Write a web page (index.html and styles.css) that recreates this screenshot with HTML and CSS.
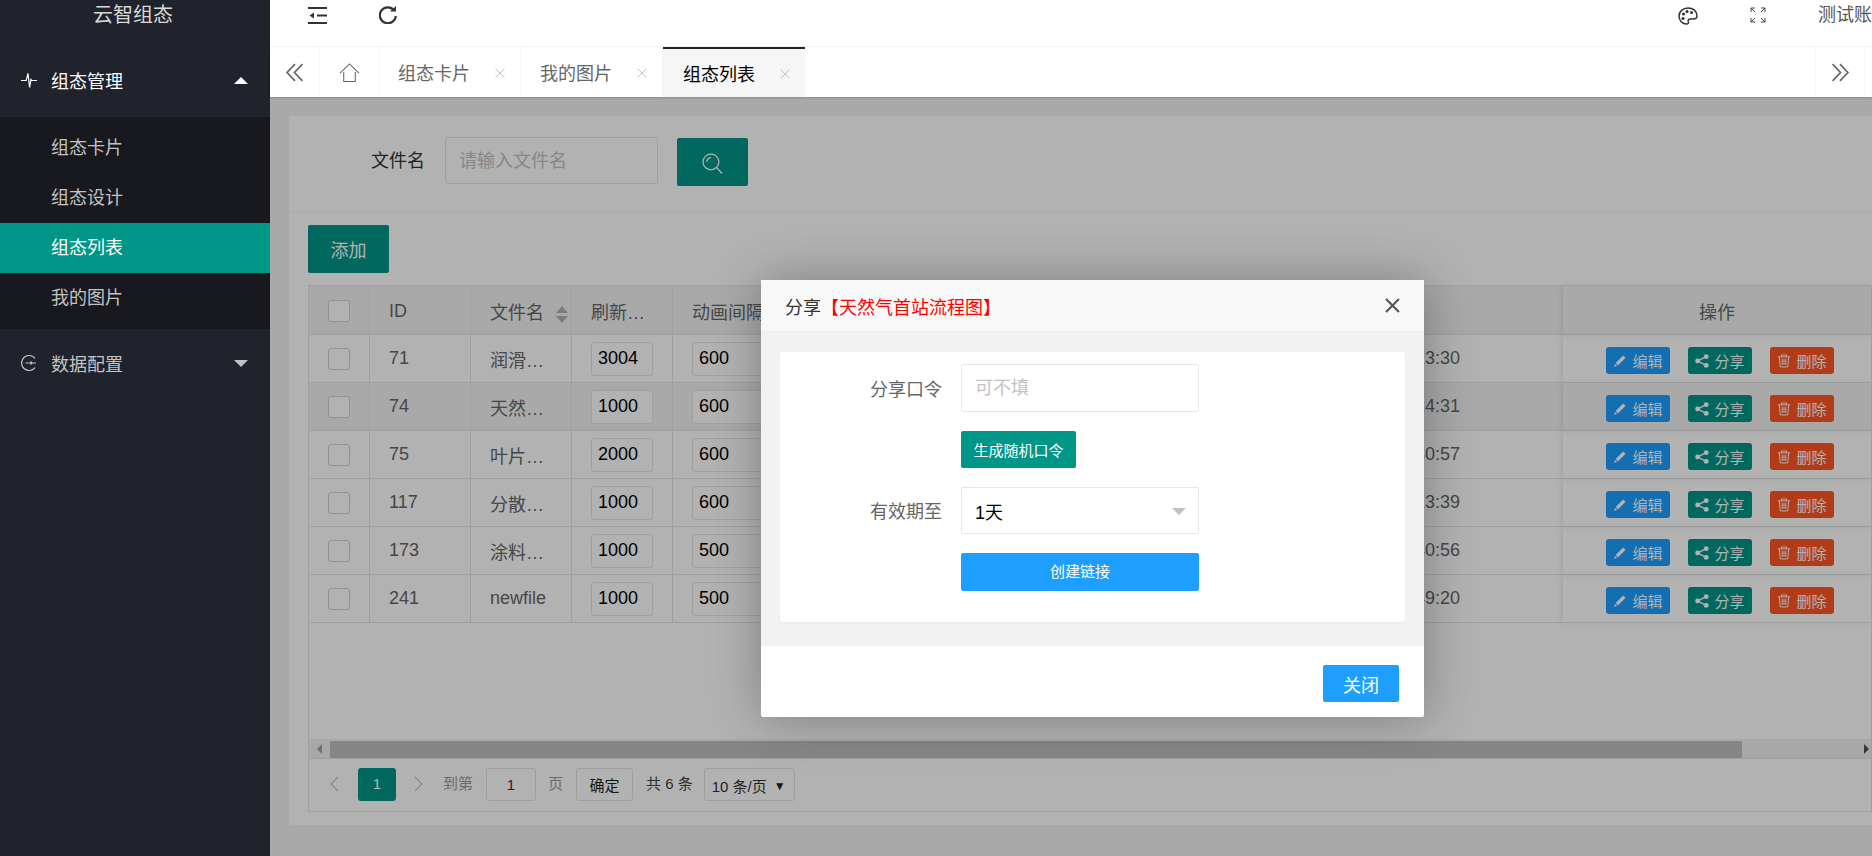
FILE: index.html
```html
<!DOCTYPE html>
<html lang="zh-CN">
<head>
    <meta charset="UTF-8">
    <title>云智组态</title>
    <link rel="stylesheet" href="styles.css">
</head>
<body>
    <svg class="sprites" xmlns="http://www.w3.org/2000/svg">
        <symbol id="i-edit" viewBox="0 0 16 16"><path d="M11.6 1.6l2.8 2.8-8.6 8.6-2.8-2.8zM2.3 11.4l2.3 2.3-3.4 1.1z" fill="currentColor"/></symbol>
        <symbol id="i-share" viewBox="0 0 16 16"><circle cx="12.8" cy="3" r="2.8" fill="currentColor"/><circle cx="12.8" cy="13" r="2.8" fill="currentColor"/><circle cx="3" cy="8" r="2.8" fill="currentColor"/><path d="M12.8 3L3 8l9.8 5" fill="none" stroke="currentColor" stroke-width="1.6"/></symbol>
        <symbol id="i-trash" viewBox="0 0 16 16"><path d="M1 3.2h14M5 3V1.2h6V3M2.8 3.4l.9 11.4h8.6l.9-11.4M6 5.6v7M8 5.6v7M10 5.6v7" fill="none" stroke="currentColor" stroke-width="1.1"/></symbol>
        <symbol id="i-x" viewBox="0 0 10 10"><path d="M.5 .5l9 9M9.500 .5l-9 9" fill="none" stroke="currentColor" stroke-width="1"/></symbol>
    </svg>

    <aside class="side">
        <div class="logo">云智组态</div>
        <div class="nav-item open">
            <svg class="nav-icon" viewBox="0 0 16 16"><path d="M0 8.500h5.200L7 1.500 8.600 15.500l1.400-8 .8 1h5.200" fill="none" stroke="currentColor" stroke-width="1.200"/></svg>
            <span>组态管理</span>
            <i class="arrow up"></i>
        </div>
        <div class="sub-nav">
            <a>组态卡片</a>
            <a>组态设计</a>
            <a class="active">组态列表</a>
            <a>我的图片</a>
        </div>
        <div class="nav-item second">
            <svg class="nav-icon" viewBox="0 0 16 16"><path d="M14 3.400A7.500 7.500 0 1 0 14 12.600M4.500 8H15M9.500 6.400L11 8 9.500 9.600" fill="none" stroke="currentColor" stroke-width="1.200"/></svg>
            <span>数据配置</span>
            <i class="arrow down"></i>
        </div>
    </aside>

    <div class="main">
        <header class="topbar">
            <svg class="top-icon shrink" viewBox="0 0 19 17"><path d="M0 1h19M0 16h19M9 8.500h10" fill="none" stroke="currentColor" stroke-width="2.200"/><path d="M6 5.500v6L1.500 8.500z" fill="currentColor"/></svg>
            <svg class="top-icon refresh" viewBox="0 0 18 18"><path d="M15 4.200A8 8 0 1 0 16.800 10" fill="none" stroke="currentColor" stroke-width="2.200"/><path d="M11 5.600h6V0z" fill="currentColor"/></svg>
            <div class="top-right">
                <svg class="top-icon theme" viewBox="0 0 20 18"><path d="M10 1C4.800 1 1 4.600 1 9c0 4.600 3.400 8 7.600 8 1.600 0 2.200-1 1.700-2.300-.5-1.500.3-2.700 2-2.700h3.200c2.200 0 3.500-1.300 3.500-3.200C19 4.200 15 1 10 1z" fill="none" stroke="currentColor" stroke-width="1.500"/><circle cx="5.500" cy="7" r="1.500" fill="currentColor"/><circle cx="9" cy="4.500" r="1.500" fill="currentColor"/><circle cx="13.500" cy="5.500" r="1.500" fill="currentColor"/><circle cx="5" cy="11.500" r="1.500" fill="currentColor"/></svg>
                <svg class="top-icon full" viewBox="0 0 16 16"><path d="M1 5V1h4M1 1l4 4M11 1h4v4M15 1l-4 4M1 11v4h4M1 15l4-4M15 11v4h-4M15 15l-4-4" fill="none" stroke="currentColor" stroke-width="1"/></svg>
                <span class="user">测试账号</span>
            </div>
        </header>

        <nav class="tabs">
            <div class="tab-btn left">
                <svg viewBox="0 0 18 18"><path d="M9 1L1.500 9 9 17M16 1L8.500 9 16 17" fill="none" stroke="currentColor" stroke-width="1.600"/></svg>
            </div>
            <div class="tab-home">
                <svg viewBox="0 0 20 18"><path d="M1 9.500L10 .8l9 8.700M4.500 8.500V17.500h11V8.500" fill="none" stroke="currentColor" stroke-width="1"/></svg>
            </div>
            <div class="tab">组态卡片<svg class="tab-x"><use href="#i-x"/></svg></div>
            <div class="tab">我的图片<svg class="tab-x"><use href="#i-x"/></svg></div>
            <div class="tab current">组态列表<svg class="tab-x"><use href="#i-x"/></svg></div>
            <div class="tab-fill"></div>
            <div class="tab-btn right">
                <svg viewBox="0 0 18 18"><path d="M2 1l7.500 8L2 17M9 1l7.500 8L9 17" fill="none" stroke="currentColor" stroke-width="1.600"/></svg>
            </div>
        </nav>

        <div class="content">
            <section class="card">
                <form class="search">
                    <label class="search-label">文件名</label>
                    <input class="search-input" placeholder="请输入文件名">
                    <button type="button" class="search-btn">
                        <svg viewBox="0 0 20 20"><circle cx="8.500" cy="8.500" r="7.500" fill="none" stroke="currentColor" stroke-width="1.200"/><path d="M14 14l5 5.500M4.500 8.500A4 4 0 0 1 8.500 4.500" fill="none" stroke="currentColor" stroke-width="1.200"/></svg>
                    </button>
                </form>
                <div class="list">
                    <button type="button" class="add-btn">添加</button>
                    <div class="table-box">
                        <div class="table-wrap">
                            <table>
                                <colgroup>
                                    <col class="c-check"><col class="c-id"><col class="c-name"><col class="c-num"><col class="c-anim"><col><col class="c-ops">
                                </colgroup>
                                <thead>
                                    <tr>
                                        <th><div class="check"></div></th>
                                        <th>ID</th>
                                        <th class="sortable">文件名<span class="sort"><i></i><i></i></span></th>
                                        <th><div class="clip">刷新间隔</div></th>
                                        <th>动画间隔</th>
                                        <th></th>
                                        <th class="ops">操作</th>
                                    </tr>
                                </thead>
                                <tbody>
                                    <tr>
                                        <td><div class="check"></div></td><td>71</td><td><div class="clip">润滑油站流程图</div></td>
                                        <td><input class="num" value="3004"></td><td><input class="num wide" value="600"></td>
                                        <td class="time">23:30</td>
                                        <td class="ops"><a class="mini blue"><svg><use href="#i-edit"/></svg>编辑</a><a class="mini green"><svg><use href="#i-share"/></svg>分享</a><a class="mini red"><svg><use href="#i-trash"/></svg>删除</a></td>
                                    </tr>
                                    <tr class="hover">
                                        <td><div class="check"></div></td><td>74</td><td><div class="clip">天然气首站流程图</div></td>
                                        <td><input class="num" value="1000"></td><td><input class="num wide" value="600"></td>
                                        <td class="time">24:31</td>
                                        <td class="ops"><a class="mini blue"><svg><use href="#i-edit"/></svg>编辑</a><a class="mini green"><svg><use href="#i-share"/></svg>分享</a><a class="mini red"><svg><use href="#i-trash"/></svg>删除</a></td>
                                    </tr>
                                    <tr>
                                        <td><div class="check"></div></td><td>75</td><td><div class="clip">叶片机流程图</div></td>
                                        <td><input class="num" value="2000"></td><td><input class="num wide" value="600"></td>
                                        <td class="time">30:57</td>
                                        <td class="ops"><a class="mini blue"><svg><use href="#i-edit"/></svg>编辑</a><a class="mini green"><svg><use href="#i-share"/></svg>分享</a><a class="mini red"><svg><use href="#i-trash"/></svg>删除</a></td>
                                    </tr>
                                    <tr>
                                        <td><div class="check"></div></td><td>117</td><td><div class="clip">分散机流程图</div></td>
                                        <td><input class="num" value="1000"></td><td><input class="num wide" value="600"></td>
                                        <td class="time">13:39</td>
                                        <td class="ops"><a class="mini blue"><svg><use href="#i-edit"/></svg>编辑</a><a class="mini green"><svg><use href="#i-share"/></svg>分享</a><a class="mini red"><svg><use href="#i-trash"/></svg>删除</a></td>
                                    </tr>
                                    <tr>
                                        <td><div class="check"></div></td><td>173</td><td><div class="clip">涂料线流程图</div></td>
                                        <td><input class="num" value="1000"></td><td><input class="num wide" value="500"></td>
                                        <td class="time">40:56</td>
                                        <td class="ops"><a class="mini blue"><svg><use href="#i-edit"/></svg>编辑</a><a class="mini green"><svg><use href="#i-share"/></svg>分享</a><a class="mini red"><svg><use href="#i-trash"/></svg>删除</a></td>
                                    </tr>
                                    <tr>
                                        <td><div class="check"></div></td><td>241</td><td>newfile</td>
                                        <td><input class="num" value="1000"></td><td><input class="num wide" value="500"></td>
                                        <td class="time">49:20</td>
                                        <td class="ops"><a class="mini blue"><svg><use href="#i-edit"/></svg>编辑</a><a class="mini green"><svg><use href="#i-share"/></svg>分享</a><a class="mini red"><svg><use href="#i-trash"/></svg>删除</a></td>
                                    </tr>
                                </tbody>
                            </table>
                        </div>
                        <div class="scrollbar">
                            <i class="sb-left"></i>
                            <div class="sb-thumb"></div>
                            <i class="sb-right"></i>
                        </div>
                        <div class="pager">
                            <svg class="chev" viewBox="0 0 10 16"><path d="M9 1L2 8l7 7" fill="none" stroke="currentColor" stroke-width="1.200"/></svg>
                            <span class="page-cur">1</span>
                            <svg class="chev" viewBox="0 0 10 16"><path d="M1 1l7 7-7 7" fill="none" stroke="currentColor" stroke-width="1.200"/></svg>
                            <span class="page-txt goto">到第</span>
                            <input class="page-input" value="1">
                            <span class="page-txt">页</span>
                            <button type="button" class="page-ok">确定</button>
                            <span class="page-total">共 6 条</span>
                            <div class="page-size">10 条/页<span class="caret">▼</span></div>
                        </div>
                    </div>
                </div>
            </section>

            <div class="shade"></div>

            <div class="modal">
                <div class="modal-head">
                    <span>分享<b>【天然气首站流程图】</b></span>
                    <svg class="modal-x" viewBox="0 0 14 14"><path d="M1 1l12 12M13 1L1 13" fill="none" stroke="currentColor" stroke-width="2"/></svg>
                </div>
                <div class="modal-body">
                    <div class="share-form">
                        <div class="row">
                            <label>分享口令</label>
                            <input class="field" placeholder="可不填">
                        </div>
                        <div class="row gen-row">
                            <button type="button" class="gen-btn">生成随机口令</button>
                        </div>
                        <div class="row">
                            <label class="valid-label">有效期至</label>
                            <div class="field select">1天<i class="select-arrow"></i></div>
                        </div>
                        <div class="row link-row">
                            <button type="button" class="link-btn">创建链接</button>
                        </div>
                    </div>
                </div>
                <div class="modal-foot">
                    <button type="button" class="close-btn">关闭</button>
                </div>
            </div>
        </div>
    </div>
</body>
</html>
```

FILE: styles.css
```css
* {
    box-sizing: border-box;
}
body {
    margin: 0;
    height: 100vh;
    display: flex;
    overflow: hidden;
    font-family: "Liberation Sans", "Noto Sans CJK SC", sans-serif;
    font-size: 18px;
    color: #666;
    background: #fff;
}
button, input {
    font: inherit;
}
.sprites {
    display: none;
}

/* sidebar */
.side {
    width: 270px;
    flex: none;
    background: #20232c;
    color: #c2c2c2;
}
.logo {
    height: 47px;
    padding-top: 1px;
    padding-left: 93px;
    font-size: 20px;
    line-height: 28px;
    color: #d8d8d8;
}
.nav-item {
    height: 70px;
    display: flex;
    align-items: center;
    padding: 0 21px 4px;
}
.nav-item.second {
    padding-bottom: 2px;
}
.nav-item.open {
    color: #fff;
}
.nav-icon {
    width: 16px;
    height: 16px;
    margin-right: 14px;
}
.arrow {
    margin-left: auto;
    margin-right: 1px;
    border-left: 7.5px solid transparent;
    border-right: 7.5px solid transparent;
}
.arrow.up {
    border-bottom: 7.5px solid #fff;
}
.arrow.down {
    border-top: 7.5px solid #c2c2c2;
}
.sub-nav {
    background: #18191f;
    padding: 6px 0;
}
.sub-nav a {
    display: block;
    height: 50px;
    line-height: 50px;
    padding-left: 51px;
}
.sub-nav a.active {
    background: #009688;
    color: #fff;
}

/* header + tabs */
.main {
    flex: 1;
    min-width: 0;
    display: flex;
    flex-direction: column;
}
.topbar {
    height: 47px;
    flex: none;
    display: flex;
    align-items: flex-start;
    border-bottom: 1px solid #f6f6f6;
    color: #333;
}
.top-icon {
    display: block;
    flex: none;
}
.shrink {
    width: 19px;
    height: 17px;
    margin: 7px 0 0 38px;
}
.refresh {
    width: 18px;
    height: 18px;
    margin: 6px 0 0 52px;
}
.top-right {
    margin-left: auto;
    display: flex;
    align-items: flex-start;
    width: 194px;
    overflow: hidden;
}
.theme {
    width: 20px;
    height: 18px;
    margin-top: 7px;
}
.full {
    width: 16px;
    height: 16px;
    margin: 7px 0 0 52px;
    color: #444;
}
.user {
    flex: none;
    margin-left: 52px;
    line-height: 31px;
    white-space: nowrap;
    color: #555;
}
.tabs {
    height: 50px;
    flex: none;
    display: flex;
    background: #fff;
    box-shadow: 0 1px 2px rgba(0,0,0,.2);
    position: relative;
    z-index: 1;
}
.tab-btn, .tab-home {
    display: flex;
    align-items: center;
    justify-content: center;
    flex: none;
    color: #666;
}
.tab-btn {
    width: 50px;
}
.tab-btn svg {
    width: 20px;
    height: 19px;
}
.tab-btn.left {
    border-right: 1px solid #f6f6f6;
}
.tab-btn.right {
    border-left: 1px solid #f6f6f6;
    border-right: 1px solid #f6f6f6;
    margin-right: 7px;
}
.tab-home {
    width: 59px;
    border-right: 1px solid #f6f6f6;
}
.tab-home svg {
    width: 21px;
    height: 19px;
}
.tab {
    width: 142px;
    flex: none;
    display: flex;
    align-items: center;
    padding-left: 19px;
    border-right: 1px solid #f6f6f6;
    color: #666;
}
.tab.current {
    background: #f6f6f6;
    color: #000;
    border-top: 2px solid #20232c;
    border-right: 0;
    padding-left: 20px;
}
.tab-x {
    width: 10px;
    height: 10px;
    margin: 2px 0 0 25px;
    color: #c2c2c2;
}
.tab-fill {
    flex: 1;
}

/* page content */
.content {
    flex: 1;
    min-height: 0;
    position: relative;
    overflow: hidden;
    background: #f2f2f2;
    padding: 19px 0 0 19px;
}
.card {
    width: 1602px;
    height: 709px;
    background: #fff;
    border-radius: 3px;
}
.search {
    height: 97px;
    display: flex;
    align-items: flex-start;
    border-bottom: 1px solid #f6f6f6;
    padding-top: 21px;
    margin: 0;
}
.search-label {
    width: 136px;
    text-align: right;
    line-height: 48px;
    color: #333;
}
.search-input {
    width: 213px;
    height: 47px;
    margin-left: 20px;
    padding: 1px 13px 0;
    border: 1px solid #e6e6e6;
    border-radius: 3px;
    outline: none;
}
.search-btn {
    width: 71px;
    height: 48px;
    margin: 1px 0 0 19px;
    border: 0;
    padding: 3px 0 0;
    border-radius: 2px;
    background: #009688;
    color: #fff;
}
.search-btn svg {
    display: block;
    width: 21px;
    height: 21px;
    margin: 0 auto;
}
input::placeholder {
    color: #c2c2c2;
}
.list {
    padding: 12px 19px 0;
}
.add-btn {
    display: block;
    width: 81px;
    height: 48px;
    border: 0;
    border-radius: 2px;
    background: #009688;
    color: #fff;
}
.table-box {
    margin-top: 12px;
    height: 527px;
    display: flex;
    flex-direction: column;
    border: 1px solid #e6e6e6;
}

/* table */
.table-wrap {
    flex: 1;
    min-height: 0;
}
table {
    width: 100%;
    table-layout: fixed;
    border-collapse: separate;
    border-spacing: 0;
}
.c-check { width: 61px; }
.c-id { width: 101px; }
.c-name { width: 101px; }
.c-num { width: 101px; }
.c-anim { width: 128px; }
.c-ops { width: 308px; }
th, td {
    height: 48px;
    padding: 0 19px;
    text-align: left;
    font-weight: 400;
    white-space: nowrap;
    border-right: 1px solid #e6e6e6;
    border-bottom: 1px solid #e6e6e6;
}
th {
    height: 49px;
    padding-top: 2px;
    background: #f2f2f2;
    overflow: hidden;
}
.hover td {
    background: #f2f2f2;
}
th:nth-child(5), td:nth-child(5), th:nth-child(6), td:nth-child(6) {
    border-right: 0;
}
th:last-child, td:last-child {
    border-right: 0;
    box-shadow: -2px 0 6px rgba(0,0,0,.08);
    text-align: center;
}
.check {
    width: 22px;
    height: 22px;
    border: 1px solid #d2d2d2;
    border-radius: 3px;
    background: #fff;
}
.clip {
    overflow: hidden;
    text-overflow: ellipsis;
}
.sortable {
    padding-right: 0;
}
.sort {
    display: inline-block;
    margin-left: 12px;
    vertical-align: middle;
}
.sort i {
    display: block;
    border-left: 6.5px solid transparent;
    border-right: 6.5px solid transparent;
}
.sort i:first-child {
    border-bottom: 7px solid #b2b2b2;
    margin-bottom: 3px;
}
.sort i:last-child {
    border-top: 7px solid #b2b2b2;
}
.num {
    display: block;
    width: 62px;
    height: 34px;
    padding: 0 6px;
    border: 1px solid #e6e6e6;
    border-radius: 3px;
    background: #fff;
    color: #000;
    outline: none;
}
.num.wide {
    width: 100px;
}
.time {
    text-align: right;
    padding-right: 103px;
}
td.ops {
    padding: 0 0 0 43px;
    text-align: left;
    font-size: 0;
}
.mini {
    display: inline-flex;
    align-items: center;
    justify-content: center;
    width: 64px;
    height: 27px;
    margin: 4px 18px 0 0;
    border-radius: 3px;
    color: #fff;
    font-size: 15px;
}
.mini svg {
    width: 14px;
    height: 14px;
    margin-right: 5px;
}
.blue { background: #1e9fff; }
.green { background: #009688; }
.red { background: #ff5722; }

/* scrollbar + pager */
.scrollbar {
    height: 20px;
    flex: none;
    display: flex;
    align-items: flex-end;
    background: #f1f1f1;
    border-bottom: 1px solid #e6e6e6;
    position: relative;
}
.sb-thumb {
    width: 1412px;
    height: 17px;
    margin-left: 21px;
    background: #c1c1c1;
}
.sb-left, .sb-right {
    position: absolute;
    top: 5px;
    border-top: 5px solid transparent;
    border-bottom: 5px solid transparent;
}
.sb-left {
    left: 8px;
    border-right: 5px solid #a3a3a3;
}
.sb-right {
    right: 2px;
    border-left: 5px solid #505050;
}
.pager {
    height: 52px;
    flex: none;
    display: flex;
    align-items: flex-start;
    padding: 9px 0 0 20px;
    font-size: 15px;
    color: #999;
}
.chev {
    width: 10px;
    height: 16px;
    margin-top: 8px;
    color: #c2c2c2;
}
.page-cur {
    width: 38px;
    height: 33px;
    margin: 0 18px 0 19px;
    border-radius: 3px;
    background: #009688;
    color: #fff;
    text-align: center;
    line-height: 31px;
}
.page-txt {
    line-height: 31px;
}
.goto {
    margin-left: 19px;
}
.page-input {
    width: 50px;
    height: 33px;
    margin: 0 12px 0 13px;
    border: 1px solid #e6e6e6;
    border-radius: 3px;
    background: #fff;
    color: #333;
    text-align: center;
    outline: none;
}
.page-ok {
    width: 57px;
    height: 33px;
    margin-left: 13px;
    padding: 0;
    border: 1px solid #e6e6e6;
    border-radius: 3px;
    background: #fff;
    color: #222;
}
.page-total {
    margin-left: 13px;
    line-height: 31px;
    color: #444;
}
.page-size {
    width: 91px;
    height: 33px;
    margin-left: 11px;
    padding-left: 7px;
    border: 1px solid #e6e6e6;
    border-radius: 3px;
    line-height: 35px;
    color: #333;
    white-space: nowrap;
    display: flex;
    background: #fff;
}
.caret {
    margin-left: 7px;
    font-size: 12px;
    color: #222;
}

/* layer */
.shade {
    position: absolute;
    inset: 0;
    background: rgba(0,0,0,.3);
}
.modal {
    position: absolute;
    left: 491px;
    top: 183px;
    width: 663px;
    height: 437px;
    display: flex;
    flex-direction: column;
    background: #fff;
    border-radius: 2px;
    box-shadow: 1px 1px 50px rgba(0,0,0,.3);
}
.modal-head {
    height: 52px;
    flex: none;
    display: flex;
    align-items: center;
    justify-content: space-between;
    padding: 0 24px;
    background: #f8f8f8;
    color: #333;
    border-bottom: 1px solid #eee;
}
.modal-head b {
    font-weight: 400;
    color: #f00;
}
.modal-x {
    width: 15px;
    height: 15px;
    color: #555;
}
.modal-body {
    height: 314px;
    flex: none;
    padding: 20px 19px 0;
    background: #f2f2f2;
}
.share-form {
    height: 270px;
    padding-top: 12px;
    background: #fff;
    border-radius: 3px;
    box-shadow: 0 1px 2px rgba(0,0,0,.05);
}
.row {
    display: flex;
    align-items: center;
    padding-left: 181px;
    position: relative;
}
.row label {
    position: absolute;
    left: 0;
    width: 162px;
    text-align: right;
    color: #666;
}
.row .valid-label {
    margin-top: -2px;
}
.field {
    width: 238px;
    height: 48px;
    padding: 1px 13px 0;
    border: 1px solid #e6e6e6;
    border-radius: 2px;
    outline: none;
    color: #000;
}
.field::placeholder {
    color: #c2c2c2;
}
.select {
    display: flex;
    align-items: center;
    height: 47px;
    justify-content: space-between;
}
.select-arrow {
    margin-right: -1px;
    border-left: 7px solid transparent;
    border-right: 7px solid transparent;
    border-top: 7px solid #c2c2c2;
}
.gen-row {
    margin: 19px 0;
}
.gen-btn {
    width: 115px;
    height: 37px;
    padding: 0;
    border: 0;
    border-radius: 2px;
    background: #009688;
    color: #fff;
    font-size: 15px;
}
.link-row {
    margin-top: 19px;
}
.link-btn {
    width: 238px;
    height: 38px;
    padding: 0 0 3px;
    border: 0;
    border-radius: 2px;
    background: #1e9fff;
    color: #fff;
    font-size: 15px;
}
.modal-foot {
    flex: 1;
    display: flex;
    justify-content: flex-end;
    padding: 19px 25px 0 0;
}
.close-btn {
    width: 76px;
    height: 37px;
    padding: 0;
    border: 0;
    border-radius: 2px;
    background: #1e9fff;
    color: #fff;
}
```
